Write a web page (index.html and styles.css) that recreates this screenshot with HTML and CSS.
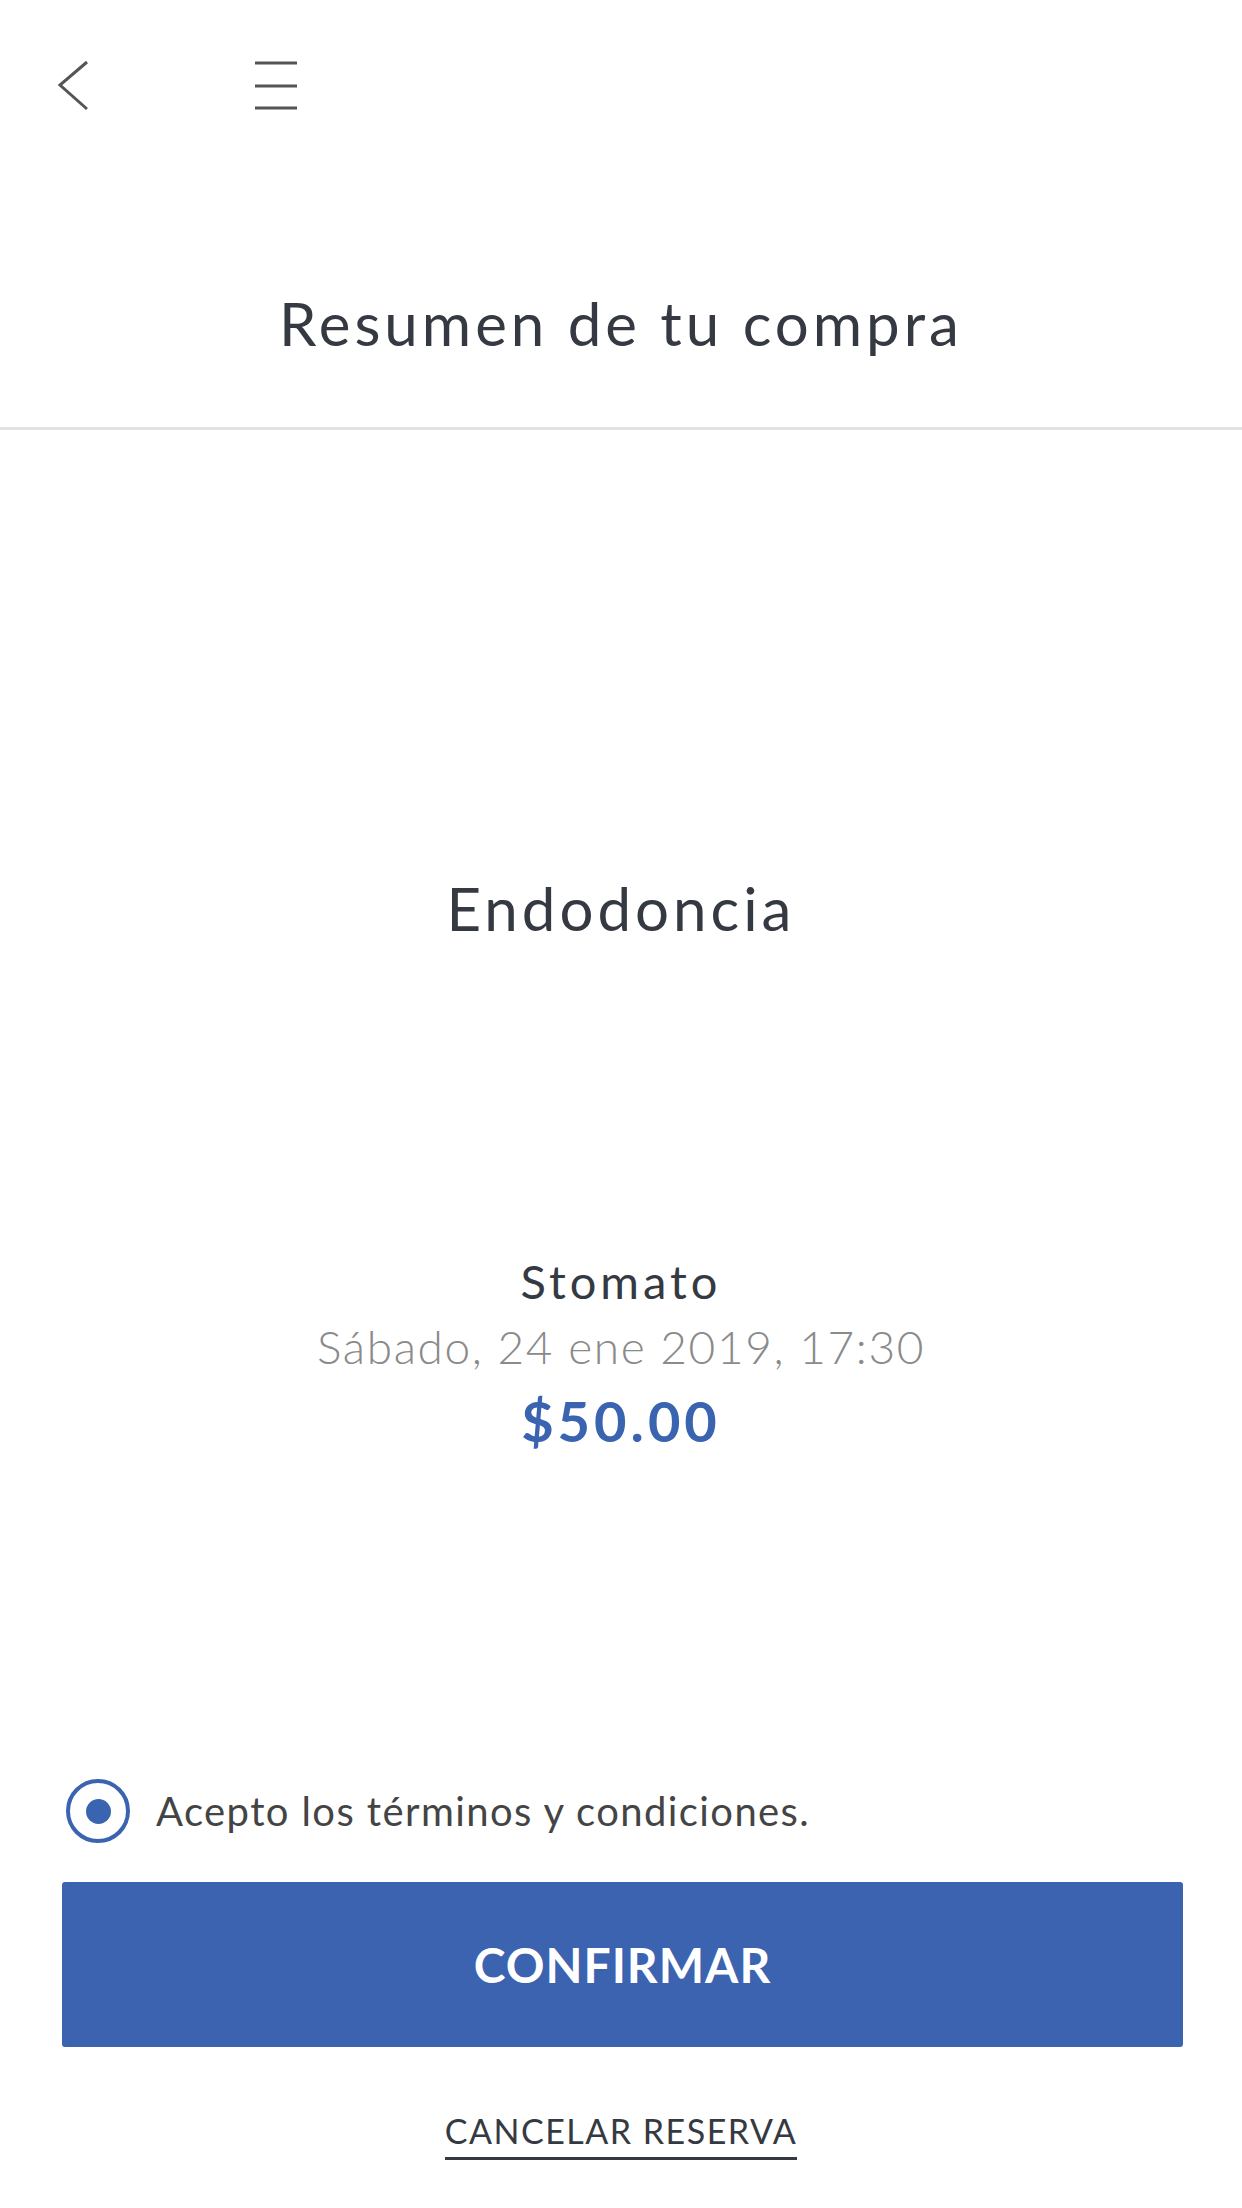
FILE: index.html
```html
<!DOCTYPE html>
<html lang="es">
<head>
  <meta charset="UTF-8">
  <title>Resumen de tu compra</title>
  <link rel="stylesheet" href="styles.css">
</head>
<body>
<div class="top-bar">
    <svg class="icon-back" width="34" height="52" viewBox="0 0 34 52">
        <polyline points="30,2 3,25 30,49" fill="none" stroke="#555" stroke-width="3"/>
    </svg>
    <svg class="icon-menu" width="46" height="52" viewBox="0 0 46 52">
        <line x1="2" y1="3" x2="44" y2="3" stroke="#555" stroke-width="3"/>
        <line x1="2" y1="26" x2="44" y2="26" stroke="#555" stroke-width="3"/>
        <line x1="2" y1="48" x2="44" y2="48" stroke="#555" stroke-width="3"/>
    </svg>
</div>

<div class="page-title">Resumen de tu compra</div>

<div class="summary">
    <div class="service">Endodoncia</div>
    <div class="details">
        <div class="clinic">Stomato</div>
        <div class="date">Sábado, 24 ene 2019, 17:30</div>
        <div class="price">$50.00</div>
    </div>
</div>

<div class="footer">
    <label class="terms">
        <span class="radio"><span class="radio-dot"></span></span>
        Acepto los términos y condiciones.
    </label>
    <button class="btn-confirm">CONFIRMAR</button>
    <a class="cancel-link">CANCELAR RESERVA</a>
</div>
</body>
</html>
```

FILE: styles.css
```css
body {
  margin: 0;
  background: #fff;
  font-family: Lato, "Open Sans", sans-serif;
  color: #353a42;
}
.top-bar {
  height: 172px;
  display: flex;
  align-items: center;
  padding-left: 57px;
  box-sizing: border-box;
}
.icon-back {
  margin-right: 162px;
}
.page-title {
  margin-top: 115px;
  padding-bottom: 68px;
  border-bottom: 3px solid #e2e2e2;
  text-align: center;
  font-size: 60px;
  line-height: 72px;
  letter-spacing: 4px;
}
.summary {
  text-align: center;
}
.service {
  margin-top: 442px;
  font-size: 60px;
  line-height: 72px;
  letter-spacing: 4px;
}
.details {
  margin-top: 304px;
}
.clinic {
  font-size: 47px;
  font-weight: 400;
  line-height: 66px;
  letter-spacing: 4px;
}
.date {
  font-size: 46px;
  font-weight: 300;
  color: #8a8a8a;
  line-height: 66px;
  letter-spacing: 1.6px;
}
.price {
  margin-top: 8px;
  font-size: 56px;
  font-weight: 700;
  color: #3a63b0;
  line-height: 66px;
  letter-spacing: 4px;
}
.footer {
  margin-top: 325px;
  display: flex;
  flex-direction: column;
}
.terms {
  display: flex;
  align-items: center;
  padding-left: 66px;
  font-size: 40px;
  color: #444;
  letter-spacing: 1.4px;
}
.radio {
  width: 64px;
  height: 64px;
  box-sizing: border-box;
  border: 4px solid #3a63b0;
  border-radius: 50%;
  display: flex;
  align-items: center;
  justify-content: center;
  margin-right: 26px;
}
.radio-dot {
  width: 25px;
  height: 25px;
  border-radius: 50%;
  background: #3a63b0;
}
.btn-confirm {
  margin: 39px 59px 0 62px;
  height: 165px;
  border: none;
  border-radius: 3px;
  background: #3b63b0;
  color: #fff;
  font-family: Lato, sans-serif;
  font-size: 48px;
  font-weight: 700;
  letter-spacing: 1px;
}
.cancel-link {
  align-self: center;
  margin-top: 64px;
  padding-bottom: 6px;
  border-bottom: 3px solid #353a42;
  font-size: 34px;
  line-height: 40px;
  color: #353a42;
  letter-spacing: 1.5px;
}
```
